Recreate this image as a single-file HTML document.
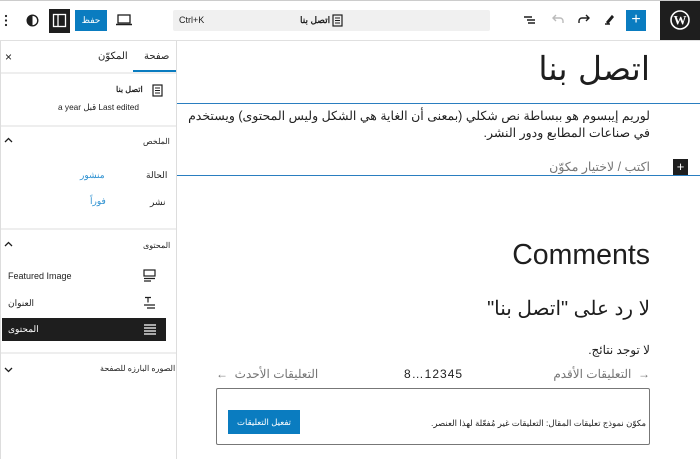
<!DOCTYPE html>
<html><head><meta charset="utf-8"><style>
*{margin:0;padding:0;box-sizing:border-box}
body{width:700px;height:459px;overflow:hidden;background:#fff;font-family:"Liberation Sans","Noto Sans CJK SC",sans-serif;color:#1e1e1e;position:relative}
.a{position:absolute}
.t{position:absolute;white-space:nowrap;direction:rtl}
.s{font-size:9px}
</style></head><body>
<div class="a" style="left:0;top:0;width:700px;height:1px;background:#ccc"></div>
<div class="a" style="left:0;top:40px;width:700px;height:1px;background:#e0e0e0"></div>
<div class="a" style="left:660px;top:1px;width:40px;height:39px;background:#1e1e1e"></div>
<svg class="a" style="left:670px;top:10px" width="20" height="20" viewBox="0 0 20 20"><circle cx="10" cy="10" r="9" fill="none" stroke="#fff" stroke-width="1.6"/><text x="10" y="14.5" text-anchor="middle" font-family="Liberation Serif" font-weight="bold" font-size="13" fill="#fff">W</text></svg>
<div class="a" style="left:626px;top:10px;width:20px;height:21px;background:#0a7cc0;color:#fff;font-size:16px;text-align:center;line-height:20px">+</div>
<svg class="a" style="left:600px;top:12px" width="16" height="16"><path d="M5 12h5M7 10l5-6 1 1-5 6z" stroke="#1e1e1e" stroke-width="1.5" fill="#1e1e1e"/></svg>
<svg class="a" style="left:576px;top:12px" width="16" height="16"><path d="M3 11V9a3 3 0 0 1 3-3h7M10 3l3 3-3 3" stroke="#1e1e1e" stroke-width="1.4" fill="none"/></svg>
<svg class="a" style="left:550px;top:12px" width="16" height="16"><path d="M13 11V9a3 3 0 0 0-3-3H3M6 3L3 6l3 3" stroke="#bbb" stroke-width="1.4" fill="none"/></svg>
<svg class="a" style="left:522px;top:12px" width="16" height="16"><path d="M2 5h8M5 8h8M6 11h7" stroke="#1e1e1e" stroke-width="1.4"/></svg>
<div class="a" style="left:173px;top:10px;width:317px;height:21px;background:#f0f0f0;border-radius:2px"></div>
<div class="t" style="left:179px;top:15px;font-size:9px;direction:ltr">Ctrl+K</div>
<div class="t" style="left:300px;top:15px;font-size:9px;font-weight:bold">اتصل بنا</div>
<svg class="a" style="left:332px;top:14px" width="11" height="13"><rect x="1" y="1" width="9" height="11" fill="none" stroke="#1e1e1e" stroke-width="1.2"/><path d="M3 4h5M3 6.5h5M3 9h5" stroke="#1e1e1e"/></svg>
<svg class="a" style="left:116px;top:13px" width="16" height="14"><rect x="2" y="2" width="12" height="8" fill="none" stroke="#1e1e1e" stroke-width="1.3"/><path d="M0 11.5h16" stroke="#1e1e1e" stroke-width="1.5"/></svg>
<div class="a" style="left:75px;top:10px;width:32px;height:21px;background:#0a7cc0;color:#fff;font-size:9px;text-align:center;line-height:21px">حفظ</div>
<div class="a" style="left:49px;top:9px;width:21px;height:24px;background:#1e1e1e"></div>
<svg class="a" style="left:52px;top:13px" width="15" height="15"><rect x="1.5" y="1.5" width="12" height="12" fill="none" stroke="#fff" stroke-width="1.3"/><path d="M6 2v11" stroke="#fff" stroke-width="1.3"/></svg>
<svg class="a" style="left:26px;top:14px" width="13" height="13"><circle cx="6.5" cy="6.5" r="5.3" fill="none" stroke="#1e1e1e" stroke-width="1.4"/><path d="M6.5 1.2a5.3 5.3 0 0 0 0 10.6z" fill="#1e1e1e"/></svg>
<svg class="a" style="left:4px;top:14px" width="5" height="14"><circle cx="2" cy="2" r="1.1" fill="#1e1e1e"/><circle cx="2" cy="6.5" r="1.1" fill="#1e1e1e"/><circle cx="2" cy="11" r="1.1" fill="#1e1e1e"/></svg>
<div class="a" style="left:176px;top:41px;width:1px;height:418px;background:#ddd"></div>
<div class="a" style="left:0;top:41px;width:1px;height:418px;background:#ddd"></div>
<div class="t" style="left:144px;top:51px;font-size:10px">صفحة</div>
<div class="t" style="left:98px;top:51px;font-size:10px">المكوّن</div>
<div class="t" style="left:5px;top:50px;font-size:12px">×</div>
<div class="a" style="left:133px;top:70px;width:43px;height:2px;background:#0a7cc0"></div>
<div class="a" style="left:1px;top:72px;width:175px;height:2px;background:#eee"></div>
<svg class="a" style="left:152px;top:84px" width="11" height="13"><rect x="1" y="1" width="9" height="11" fill="none" stroke="#1e1e1e" stroke-width="1.2"/><path d="M3 4h5M3 6.5h5M3 9h5" stroke="#1e1e1e"/></svg>
<div class="t" style="left:116px;top:85px;font-size:8px;font-weight:bold">اتصل بنا</div>
<div class="t" style="left:58px;top:102px;font-size:8.3px;direction:ltr">a year قبل Last edited</div>
<div class="a" style="left:1px;top:125px;width:175px;height:2px;background:#eee"></div>
<div class="t" style="left:143px;top:137px;font-size:8px">الملخص</div>
<svg class="a" style="left:4px;top:137px" width="9" height="7"><path d="M1 5l3.5-3.5L8 5" stroke="#1e1e1e" stroke-width="1.3" fill="none"/></svg>
<div class="t s" style="left:146px;top:170px">الحالة</div>
<div class="t s" style="left:80px;top:170px;color:#2a8fd0">منشور</div>
<div class="t s" style="left:150px;top:197px">نشر</div>
<div class="t s" style="left:90px;top:196px;color:#2a8fd0">فوراً</div>
<div class="a" style="left:1px;top:228px;width:175px;height:2px;background:#eee"></div>
<div class="t" style="left:143px;top:241px;font-size:8px">المحتوى</div>
<svg class="a" style="left:4px;top:241px" width="9" height="7"><path d="M1 5l3.5-3.5L8 5" stroke="#1e1e1e" stroke-width="1.3" fill="none"/></svg>
<div class="t" style="left:8px;top:271px;font-size:9px;direction:ltr">Featured Image</div>
<svg class="a" style="left:143px;top:269px" width="14" height="14"><rect x="1" y="1" width="11" height="6" fill="none" stroke="#1e1e1e" stroke-width="1.2"/><path d="M1 9.5h11M1 12h7" stroke="#1e1e1e" stroke-width="1.2"/></svg>
<div class="t s" style="left:8px;top:298px">العنوان</div>
<svg class="a" style="left:143px;top:296px" width="14" height="14"><path d="M2 1.5h6M5 1.5v5M1 9h11M4 12h8" stroke="#1e1e1e" stroke-width="1.2"/></svg>
<div class="a" style="left:2px;top:318px;width:164px;height:23px;background:#1e1e1e"></div>
<div class="t" style="left:8px;top:324px;font-size:9px;color:#fff">المحتوى</div>
<svg class="a" style="left:143px;top:323px" width="14" height="13"><path d="M1 2h12M1 5h12M1 8h12M1 11h12" stroke="#fff" stroke-width="1.3"/></svg>
<div class="a" style="left:1px;top:352px;width:175px;height:2px;background:#eee"></div>
<div class="t" style="left:100px;top:364px;font-size:8px">الصوره البارزه للصفحة</div>
<svg class="a" style="left:4px;top:366px" width="9" height="7"><path d="M1 2l3.5 3.5L8 2" stroke="#1e1e1e" stroke-width="1.3" fill="none"/></svg>
<div class="t" style="right:50px;top:49px;font-size:33px;font-family:'DejaVu Sans','Liberation Sans',sans-serif;font-weight:200">اتصل بنا</div>
<div class="a" style="left:177px;top:103px;width:523px;height:1px;background:#2a7ec0"></div>
<div class="a" style="left:177px;top:175px;width:523px;height:1px;background:#2a7ec0"></div>
<div class="t" style="right:50px;top:108px;font-size:12.5px;line-height:17px;text-align:right">لوريم إيبسوم هو ببساطة نص شكلي (بمعنى أن الغاية هي الشكل وليس المحتوى) ويستخدم<br>في صناعات المطابع ودور النشر.</div>
<div class="t" style="right:50px;top:159px;font-size:12.5px;color:#757575">اكتب / لاختيار مكوّن</div>
<div class="a" style="left:673px;top:159px;width:15px;height:16px;background:#1e1e1e;color:#fff;font-size:13px;text-align:center;line-height:15px">+</div>
<div class="t" style="right:50px;top:239px;font-size:28.5px;direction:ltr">Comments</div>
<div class="t" style="right:50px;top:296px;font-size:20px">لا رد على "اتصل بنا"</div>
<div class="t" style="right:50px;top:343px;font-size:12px">لا توجد نتائج.</div>
<div class="t" style="right:50px;top:367px;font-size:12px;color:#757575">→ &nbsp;التعليقات الأقدم</div>
<div class="t" style="left:404px;top:367px;font-size:12px;direction:ltr;letter-spacing:1px">8…12345</div>
<div class="t" style="left:216px;top:367px;font-size:12px;color:#757575">التعليقات الأحدث &nbsp;←</div>
<div class="a" style="left:216px;top:388px;width:434px;height:57px;border:1px solid #777;border-radius:2px"></div>
<div class="t" style="right:54px;top:418px;font-size:8.5px">مكوّن نموذج تعليقات المقال: التعليقات غير مُفعّلة لهذا العنصر.</div>
<div class="a" style="left:228px;top:410px;width:72px;height:24px;background:#0a7cc0;color:#fff;font-size:8.5px;text-align:center;line-height:24px;direction:rtl">تفعيل التعليقات</div>
</body></html>
